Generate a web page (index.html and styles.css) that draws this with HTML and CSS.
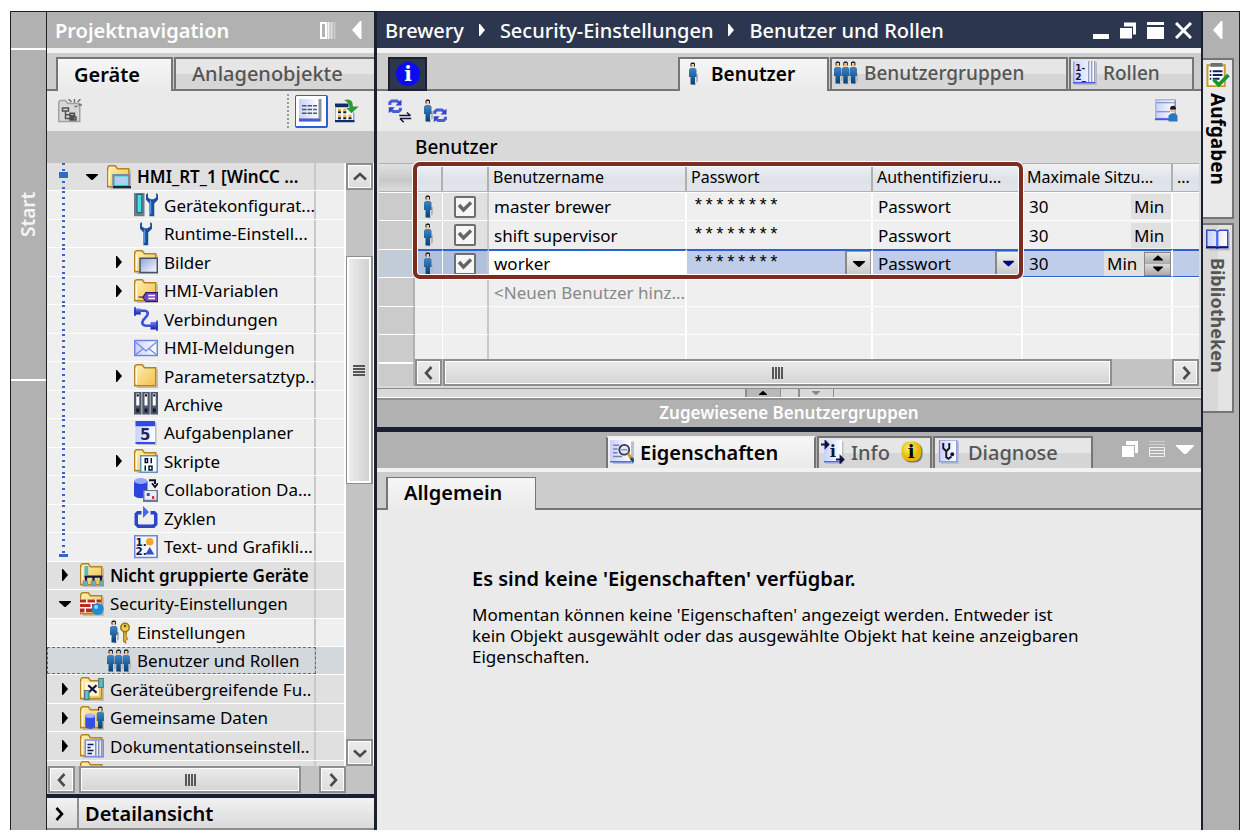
FILE: index.html
```html
<!DOCTYPE html>
<html lang="de">
<head>
<meta charset="utf-8">
<title>Benutzer und Rollen</title>
<link rel="stylesheet" href="styles.css">
</head>
<body>
<svg class="sprite" aria-hidden="true">
  <defs>
    <linearGradient id="gFolder" x1="0" y1="0" x2="1" y2="1"><stop offset="0" stop-color="#fff2b8"/><stop offset="1" stop-color="#f2bf48"/></linearGradient>
    <linearGradient id="gBody" x1="0" y1="0" x2="0" y2="1"><stop offset="0" stop-color="#3d86c8"/><stop offset="1" stop-color="#0b3d70"/></linearGradient>
    <linearGradient id="gSheet" x1="0" y1="0" x2="1" y2="0"><stop offset="0" stop-color="#c8d0ff"/><stop offset="1" stop-color="#ffffff"/></linearGradient>
    <linearGradient id="gBlue" x1="0" y1="0" x2="0" y2="1"><stop offset="0" stop-color="#6a84f4"/><stop offset="1" stop-color="#1420a8"/></linearGradient>
    <linearGradient id="gScreen" x1="0" y1="0" x2="1" y2="1"><stop offset="0" stop-color="#8ea0dc"/><stop offset="1" stop-color="#ffffff"/></linearGradient>
    <radialGradient id="gYellow" cx=".4" cy=".35"><stop offset="0" stop-color="#fff478"/><stop offset="1" stop-color="#e6b800"/></radialGradient>
  </defs>
  <symbol id="folder" viewBox="0 0 16 16"><path d="M2 15.500H15.800V3.500" stroke="#b8bcc4" fill="none"/><path d="M.5 14.500V1.500L1.500 .5H5.500L7 2.500H14.500V14.500Z" fill="url(#gFolder)" stroke="#b48420"/><path d="M1.500 3V13.500" stroke="#fffbe0" fill="none"/></symbol>
  <symbol id="person" viewBox="0 0 6 16"><path d="M2 15.500H4.500V8H6V13" fill="#b4b8be"/><path d="M1 4H4L5 5V10H4V15H1V10H0V5Z" fill="url(#gBody)"/><rect x="1" y=".3" width="3" height="3" rx="1" fill="#0c1230"/><rect x="1.600" y="1.300" width="1.800" height="2.500" fill="#f6c890"/></symbol>
  <symbol id="users" viewBox="0 0 16 16"><use href="#person" x="0" width="6" height="16"/><use href="#person" x="5.200" width="6" height="16"/><use href="#person" x="10.300" width="6" height="16"/></symbol>
  <symbol id="wrenchshape" viewBox="0 0 8 16"><path d="M0 1V4.500L2.300 7V15.500H5.500V7L8 4.500V1L6.800 0V3L5 4.200H3L1.300 3V0Z" fill="#174f9c"/><path d="M3 5V14" stroke="#5b94d8"/></symbol>
  <symbol id="hmi" viewBox="0 0 16 16"><use href="#folder" width="16" height="16"/><rect x="3.500" y="6" width="12" height="9" fill="#7d8b9c"/><rect x="4" y="14" width="12" height="1.500" fill="#202838"/><rect x="5.500" y="8" width="8" height="5" fill="#c4c8ec" stroke="#5cf4f4"/></symbol>
  <symbol id="devconf" viewBox="0 0 16 16"><rect x="0" y="0" width="7" height="15.500" fill="#6e7a88"/><rect x="2" y="1" width="3.200" height="12" fill="#3fe0e4" stroke="#0f5c68" stroke-width=".6"/><use href="#wrenchshape" x="8" width="8" height="16"/></symbol>
  <symbol id="wrench" viewBox="0 0 16 16"><use href="#wrenchshape" x="4" width="8" height="16"/></symbol>
  <symbol id="bilder" viewBox="0 0 16 16"><use href="#folder" width="16" height="16"/><rect x="4" y="5.500" width="11.500" height="9.500" fill="url(#gScreen)" stroke="#4a5468"/></symbol>
  <symbol id="tags" viewBox="0 0 16 16"><use href="#folder" width="16" height="16"/><path d="M3 12H6L8 9H16V15H8L6 12.500" fill="#7048bc" stroke="#2b126c" stroke-width=".8"/><path d="M9.500 11H14M9.500 13H14" stroke="#fff"/></symbol>
  <symbol id="connect" viewBox="0 0 16 16"><path d="M3 2.500H7Q10.500 3 8.500 6L6 9Q4.500 12 8 12.500H12" fill="none" stroke="#3854d4" stroke-width="1.800"/><rect x="0" y="1" width="4.500" height="4" fill="url(#gBlue)"/><rect x="11" y="10" width="5" height="5" fill="url(#gBlue)"/><path d="M.7 0V6M15.300 9V16" stroke="#2438c0"/></symbol>
  <symbol id="mail" viewBox="0 0 16 16"><rect x=".5" y="3" width="15" height="10" fill="url(#gSheet)" stroke="#6f84e8"/><path d="M1 4L8 10L15 4M1 12.500L6 8.500M15 12.500L10 8.500" fill="none" stroke="#7288dc" stroke-width=".8"/></symbol>
  <symbol id="archive" viewBox="0 0 16 16"><path d="M0 0H5V15H0ZM5.500 0H10.500V15H5.500ZM11 0H16V15H11Z" fill="#4e5668"/><path d="M1.500 1H3.500V9H1.500ZM7 1H9V9H7ZM12.500 1H14.500V9H12.500Z" fill="#fff"/><path d="M1.500 11H3.500V13.500H1.500ZM7 11H9V13.500H7ZM12.500 11H14.500V13.500H12.500Z" fill="#101838"/><path d="M1.800 1.500H3.200V3H1.800ZM7.300 1.500H8.700V3H7.300ZM12.800 1.500H14.200V3H12.800Z" fill="#101838"/></symbol>
  <symbol id="skripte" viewBox="0 0 16 16"><use href="#folder" width="16" height="16"/><rect x="4.500" y="4.500" width="11" height="11" fill="#fff" stroke="#5f94b8"/><path d="M7.500 6.500H9V9H7.500ZM10 11.500H12V14H10Z" fill="none" stroke="#0b1430"/><path d="M11.500 6V9.500M7.500 11V14.500" stroke="#0b1430"/></symbol>
  <symbol id="collab" viewBox="0 0 16 16"><path d="M0 2V12Q4 15 9 12V2Z" fill="#2a44e0"/><ellipse cx="4.500" cy="2" rx="4.500" ry="2" fill="#93a8f8"/><path d="M10 1.500H14V4M12 3.500L14 6L16 3.500" fill="none" stroke="#0d1030" stroke-width="1.300"/><rect x="6" y="8" width="10" height="8" fill="#6c7890"/><rect x="7" y="8.700" width="8" height="5.800" fill="#e8eef8"/><path d="M8.500 10H10.500V12H8.500Z" fill="#3448e8"/><path d="M12 12H13.500V14H12Z" fill="#d83030"/></symbol>
  <symbol id="cycle" viewBox="0 0 16 16"><path d="M5 4.500H2.500L1.500 5.500V12L3 13.500H13L14.500 12V5.500L13.500 4.500H11" fill="none" stroke="#2c44c8" stroke-width="2.300"/><path d="M6 0L10 4L6 8Z" fill="#4a68e8"/></symbol>
  <symbol id="ungrouped" viewBox="0 0 16 16"><use href="#folder" width="16" height="16"/><path d="M3 9H15M4 9V12M9 9V12M14 9V12" stroke="#0e1850" stroke-width="1.500"/><rect x="3" y="2" width="2.500" height="6" fill="#50bcc4"/><path d="M2 12H5V15H2ZM7.500 12H10.500V15H7.500ZM13 12H16V15H13Z" fill="#58b4b8" stroke="#8a929c" stroke-width=".7"/></symbol>
  <symbol id="security" viewBox="0 0 16 16"><use href="#folder" width="16" height="16"/><path d="M0 5H14V13.500H0Z" fill="#fff"/><path d="M0 5H4V7H0ZM5 5H10V7H5ZM11 5H14V7H11ZM0 8H7V10H0ZM8 8H14V10H8ZM0 11H3V13.500H0ZM4 11H9V13.500H4Z" fill="#b42c1c"/><circle cx="11.800" cy="11.300" r="4" fill="#1e8cd4"/><circle cx="10.700" cy="10" r="1.300" fill="#8ce0f8"/></symbol>
  <symbol id="userkey" viewBox="0 0 16 16"><use href="#person" x="2" width="6" height="16"/><circle cx="12" cy="5" r="2.800" fill="#e8d050" stroke="#94740c"/><circle cx="12" cy="4" r=".9" fill="#6c5408"/><path d="M11 8V14.500L12.500 15.500V13.500L14 12.500L12.800 11L13 8Z" fill="#d4b030" stroke="#94740c" stroke-width=".6"/></symbol>
  <symbol id="cross" viewBox="0 0 16 16"><use href="#folder" width="16" height="16"/><rect x="3.500" y="3.500" width="9" height="9" fill="#fff8e0"/><path d="M5.500 5.500L11 10.500M11 5.500L5.500 10.500" stroke="#0e1440" stroke-width="1.500"/><path d="M12.500 1H15.500V7H12.500ZM3 9H6V15H3Z" fill="#4cc8cc" stroke="#63707c" stroke-width=".8"/></symbol>
  <symbol id="common" viewBox="0 0 16 16"><use href="#folder" width="16" height="16"/><path d="M3.500 6V14Q7 16.500 10 14V6Z" fill="#3450e4"/><ellipse cx="6.700" cy="6.500" rx="3.200" ry="1.500" fill="#a0b0fc"/><use href="#person" x="11" width="6" height="16"/></symbol>
  <symbol id="docset" viewBox="0 0 16 16"><use href="#folder" width="16" height="16"/><rect x="3.500" y="4" width="12" height="11" fill="#eef0ff" stroke="#7c90dc"/><path d="M5 7H9M5 9H7M5 11H9M5 13H8" stroke="#141c48"/><path d="M10.500 4.500V14.500M12.500 4.500V14.500M14.500 4.500V14.500" stroke="#8894a8"/></symbol>
  <symbol id="arrows" viewBox="0 0 10 10"><path d="M1.200 4V2.500L2.500 1.400H6L7.500 2.500M8.300 5.800V7.200L7 8.400H3.500L2 7.300" fill="none" stroke="#4a5cd8" stroke-width="2"/><path d="M5 4.300H9V.3ZM4.500 5.500H.5V9.500Z" fill="#3044c8"/></symbol>
  <symbol id="sync" viewBox="0 0 16 16"><use href="#arrows" width="10" height="10"/><path d="M7.500 11H15M8 13H15.500M12.500 9L15 11M10.500 15.500L8 13" fill="none" stroke="#10143c"/></symbol>
  <symbol id="usersync" viewBox="0 0 16 16"><use href="#person" x="0" width="6" height="16"/><use href="#arrows" x="6" y="6" width="10" height="10"/></symbol>
  <symbol id="panel" viewBox="0 0 16 16"><path d="M.5 .5H13.500V13H.5Z" fill="url(#gSheet)" stroke="#a8b4f0"/><path d="M0 13.500H13" stroke="#4858e0" stroke-width="1.300"/><path d="M1 2.500H14M1 8.500H10" stroke="#7884a4" stroke-width=".8"/><path d="M13.500 1V9" stroke="#8890a8"/><circle cx="12" cy="7" r="2" fill="#f0c080"/><path d="M10 7Q10 4.500 12 4.500T14 7Z" fill="#10183c"/><path d="M9 15V11L11 9.500H13.500L15 11V15Z" fill="#2c78bc"/></symbol>
  <symbol id="clip" viewBox="0 0 16 16"><path d="M1 1.500H12.500V15.500H1Z" fill="#fff" stroke="#c89c28" stroke-width="1.300"/><rect x="3" y="0" width="8" height="2.500" fill="#68707c"/><path d="M2.500 5.500H3.500M4.500 5.500H11M2.500 8H3.500M4.500 8H11M2.500 10.500H3.500M4.500 10.500H9" stroke="#141c60" stroke-width="1.200"/><path d="M5 11L8.500 14.500L15 8" fill="none" stroke="#1c9430" stroke-width="2.500"/></symbol>
  <symbol id="book" viewBox="0 0 16 16"><path d="M2 14.500H16V3" fill="none" stroke="#b8bcc4"/><path d="M.5 1.500H6L7.500 2.500L9 1.500H14.500V12.500H9L7.500 13.500L6 12.500H.5Z" fill="url(#gSheet)" stroke="#3448c8"/><path d="M7.500 2V13" stroke="#4866f0" stroke-width="1.500"/><path d="M0 13H15" stroke="#141c60" stroke-width="1.300"/></symbol>
  <symbol id="props" viewBox="0 0 16 16"><rect x="2" y="1" width="14" height="15" fill="#bcc0cc"/><rect x="0" y="0" width="14" height="14.500" fill="url(#gSheet)"/><path d="M0 14.500H14" stroke="#5468e0"/><path d="M2 3.500H6M2 6H5M2 8.500H5M2 11H8" stroke="#7c84a0"/><circle cx="9.500" cy="6.500" r="3.300" fill="#e4e8f8" stroke="#30365c" stroke-width="1.200"/><path d="M7.500 6.500H11.500" stroke="#8c94ac"/><path d="M12 9L15 13.500" stroke="#d89c20" stroke-width="2"/><path d="M14 12L15.800 14.500" stroke="#204880" stroke-width="2"/></symbol>
  <symbol id="diag" viewBox="0 0 16 16"><rect x="2" y="1" width="12" height="15" fill="#bcc0cc"/><rect x="1" y="0" width="11.500" height="14.500" fill="url(#gSheet)" stroke="#7c90ec" stroke-width=".8"/><path d="M3.500 2V5.500L5.500 7.500L7.500 5.500V2M5.500 7V11.500L7 12.500L9 11" fill="none" stroke="#141820" stroke-width="1.300"/><circle cx="9.500" cy="9.500" r="1.300" fill="#141820"/></symbol>
  <symbol id="newdev" viewBox="0 0 16 16"><path d="M.5 15V2L1.500 1H5L6.500 3H14.500V15Z" fill="#d8d8d8" stroke="#a0a0a0"/><path d="M3 6H7V8H3ZM5 8V13H11M5 10.500H8M8 9.500H11V11H8ZM8 12H12V14H8Z" fill="none" stroke="#505050"/><path d="M7 0L9 2M11 0V2.500M15 0L13 2M13.500 4H16M11 5H13" stroke="#707070"/></symbol>
  <symbol id="list" viewBox="0 0 16 16"><rect x="0" y="0" width="15" height="15" fill="#8890a4"/><rect x="0" y="0" width="13" height="13" fill="url(#gSheet)"/><path d="M0 14H14" stroke="#4858e0" stroke-width="1.800"/><path d="M2 4.500H12M2 7H12M2 9.500H12" stroke="#4c5468" stroke-dasharray="3 .7" stroke-width=".9"/></symbol>
  <symbol id="export" viewBox="0 0 16 16"><rect x="0" y="3" width="13" height="12.500" fill="#f4f6ff"/><rect x="0" y="3" width="9" height="2.500" fill="#102c68"/><rect x="0" y="14" width="13" height="1.500" fill="#102c68"/><path d="M0 5V14M12.500 9V14" stroke="#90a0d0"/><path d="M2 6.500H4V8H2ZM5.500 6.500H7.500V8H5.500ZM2 10.500H4V12H2ZM5.500 10.500H7.500V12H5.500ZM9 10.500H11V12H9Z" fill="#f4b030"/><path d="M2 8.200H4V9.500H2ZM5.500 8.200H7.500V9.500H5.500ZM2 12.200H4V13.500H2ZM5.500 12.200H7.500V13.500H5.500ZM9 12.200H11V13.500H9Z" fill="#101840"/><path d="M6 .8Q12 -1 12 5H15.800L11 9.500L7.500 6H9.500Q10 2.500 6 .8Z" fill="#2c9c30"/></symbol>
  <symbol id="right" viewBox="0 0 12 12"><path d="M3 0H4L9 6L4 12H3Z" fill="currentColor"/></symbol>
  <symbol id="down" viewBox="0 0 12 12"><path d="M0 3H12V4L6.500 9H5.500L0 4Z" fill="currentColor"/></symbol>
  <symbol id="left" viewBox="0 0 10 18"><path d="M9.500 0V18H8L0 9L8 0Z" fill="currentColor"/></symbol>
  <symbol id="chev" viewBox="0 0 14 14"><path d="M1 9.500L7 4L13 9.500" fill="none" stroke="currentColor" stroke-width="2.600"/></symbol>
  <symbol id="restore" viewBox="0 0 16 16"><path d="M4 0H16V12H13V4H4Z" fill="#fff"/><path d="M0 5H12V16H0Z" fill="#fff"/></symbol>
</svg>

<div class="app">
  <aside class="rail rail-left">
    <div class="rail-cap"></div>
    <button class="rail-start">Start</button>
    <div class="rail-rest"></div>
  </aside>

  <section class="nav" aria-label="Projektnavigation">
    <header class="nav-title">
      <h2>Projektnavigation</h2>
      <button aria-label="Spalten"><svg width="17" height="17" viewBox="0 0 17 17"><path d="M1 1H6V16H1Z" fill="none" stroke="#fff" stroke-width="2"/><path d="M8.500 0V17" stroke="#f4f4f4" stroke-width="2"/><path d="M11.500 0V17" stroke="#e0e0e0" stroke-width="2"/><path d="M14.500 0V17" stroke="#cacaca" stroke-width="2"/></svg></button>
      <button aria-label="Einklappen"><svg width="10" height="18"><use href="#left"/></svg></button>
    </header>
    <div class="tabs nav-tabs" role="tablist">
      <button class="tab active" role="tab">Geräte</button>
      <button class="tab" role="tab">Anlagenobjekte</button>
    </div>
    <div class="toolbar nav-toolbar">
      <button aria-label="Neues Gerät"><svg class="ic"><use href="#newdev"/></svg></button>
      <span class="dots"></span>
      <button class="pressed" aria-label="Liste"><svg class="ic"><use href="#list"/></svg></button>
      <button aria-label="Übersicht"><svg class="ic"><use href="#export"/></svg></button>
    </div>
    <div class="nav-band"></div>
    <div class="tree-area">
      <ul class="tree">
        <li class="l2 head line first bold"><span class="label"><button class="tw" aria-label="Zuklappen"><svg><use href="#down"/></svg></button><svg class="ic"><use href="#hmi"/></svg>HMI_RT_1 [WinCC ...</span></li>
        <li class="l3 line"><span class="label"><i class="tw"></i><svg class="ic"><use href="#devconf"/></svg>Gerätekonfigurat...</span></li>
        <li class="l3 line"><span class="label"><i class="tw"></i><svg class="ic"><use href="#wrench"/></svg>Runtime-Einstell...</span></li>
        <li class="l3 line"><span class="label"><button class="tw" aria-label="Aufklappen"><svg><use href="#right"/></svg></button><svg class="ic"><use href="#bilder"/></svg>Bilder</span></li>
        <li class="l3 line"><span class="label"><button class="tw" aria-label="Aufklappen"><svg><use href="#right"/></svg></button><svg class="ic"><use href="#tags"/></svg>HMI-Variablen</span></li>
        <li class="l3 line"><span class="label"><i class="tw"></i><svg class="ic"><use href="#connect"/></svg>Verbindungen</span></li>
        <li class="l3 line"><span class="label"><i class="tw"></i><svg class="ic"><use href="#mail"/></svg>HMI-Meldungen</span></li>
        <li class="l3 line"><span class="label"><button class="tw" aria-label="Aufklappen"><svg><use href="#right"/></svg></button><svg class="ic"><use href="#folder"/></svg>Parametersatztyp..</span></li>
        <li class="l3 line"><span class="label"><i class="tw"></i><svg class="ic"><use href="#archive"/></svg>Archive</span></li>
        <li class="l3 line"><span class="label"><i class="tw"></i><svg class="ic" viewBox="0 0 16 16"><rect x="2" y="1" width="13" height="15" fill="#b8bcc4"/><rect x="1" y="0" width="13" height="15" fill="url(#gSheet)"/><rect x="1" y="0" width="13" height="3.500" fill="#3448e8"/><rect x="1" y="14" width="13" height="1.300" fill="#3448e8"/><text x="7.500" y="12.500" text-anchor="middle" font-family="DejaVu Sans" font-weight="bold" font-size="10" fill="#202858">5</text></svg>Aufgabenplaner</span></li>
        <li class="l3 line"><span class="label"><button class="tw" aria-label="Aufklappen"><svg><use href="#right"/></svg></button><svg class="ic"><use href="#skripte"/></svg>Skripte</span></li>
        <li class="l3 line"><span class="label"><i class="tw"></i><svg class="ic"><use href="#collab"/></svg>Collaboration Da...</span></li>
        <li class="l3 line"><span class="label"><i class="tw"></i><svg class="ic"><use href="#cycle"/></svg>Zyklen</span></li>
        <li class="l3 line last"><span class="label"><i class="tw"></i><svg class="ic" viewBox="0 0 16 16"><rect x=".5" y=".5" width="15" height="14.500" fill="#f4f6ff" stroke="#6f84e8"/><path d="M15.500 1V15" stroke="#7c88a8"/><text font-family="DejaVu Sans" font-weight="bold" font-size="7" fill="#10143c"><tspan x="1" y="7">1.</tspan><tspan x="1" y="13.500">2.</tspan></text><circle cx="10.500" cy="4.500" r="2.500" fill="#f4a818"/><path d="M10.500 8L13.500 13H7.500Z" fill="#3050c8"/></svg>Text- und Grafikli...</span></li>
        <li class="l1 head bold"><span class="label"><button class="tw" aria-label="Aufklappen"><svg><use href="#right"/></svg></button><svg class="ic"><use href="#ungrouped"/></svg>Nicht gruppierte Geräte</span></li>
        <li class="l1 head"><span class="label"><button class="tw" aria-label="Zuklappen"><svg><use href="#down"/></svg></button><svg class="ic"><use href="#security"/></svg>Security-Einstellungen</span></li>
        <li class="l2"><span class="label"><i class="tw"></i><svg class="ic"><use href="#userkey"/></svg>Einstellungen</span></li>
        <li class="l2 selected"><span class="label"><i class="tw"></i><svg class="ic"><use href="#users"/></svg>Benutzer und Rollen</span></li>
        <li class="l1 head"><span class="label"><button class="tw" aria-label="Aufklappen"><svg><use href="#right"/></svg></button><svg class="ic"><use href="#cross"/></svg>Geräteübergreifende Fu..</span></li>
        <li class="l1 head"><span class="label"><button class="tw" aria-label="Aufklappen"><svg><use href="#right"/></svg></button><svg class="ic"><use href="#common"/></svg>Gemeinsame Daten</span></li>
        <li class="l1 head"><span class="label"><button class="tw" aria-label="Aufklappen"><svg><use href="#right"/></svg></button><svg class="ic"><use href="#docset"/></svg>Dokumentationseinstell..</span></li>
        <li class="l1 head peek"><span class="label"><i class="tw"></i><svg class="ic"><use href="#folder"/></svg></span></li>
      </ul>
      <div class="vscroll">
        <button class="sbtn" aria-label="Nach oben"><svg><use href="#chev"/></svg></button>
        <div class="vthumb"><span class="grip-h"></span></div>
        <button class="sbtn" aria-label="Nach unten"><svg class="r180"><use href="#chev"/></svg></button>
      </div>
    </div>
    <div class="hscroll nav-hscroll">
      <button class="sbtn" aria-label="Nach links"><svg class="r270"><use href="#chev"/></svg></button>
      <div class="hthumb"><span class="grip-v"></span></div>
      <button class="sbtn" aria-label="Nach rechts"><svg class="r90"><use href="#chev"/></svg></button>
    </div>
    <button class="detail"><span class="detail-arrow"><svg class="r90"><use href="#chev"/></svg></span><span class="detail-name">Detailansicht</span></button>
  </section>

  <main class="main">
    <header class="main-title">
      <nav class="crumbs"><a href="#">Brewery</a><svg><use href="#right"/></svg><a href="#">Security-Einstellungen</a><svg><use href="#right"/></svg><a href="#">Benutzer und Rollen</a></nav>
      <div class="winbtns">
        <button aria-label="Minimieren"><svg width="16" height="17"><rect y="12" width="16" height="5" fill="#fff"/></svg></button>
        <button aria-label="Wiederherstellen"><svg width="16" height="17"><use href="#restore"/><path d="M0 5.500H12.500V17" fill="none" stroke="#2d364f"/></svg></button>
        <button aria-label="Maximieren"><svg width="17" height="17"><path d="M0 0H17V3H0ZM0 5H17V17H0Z" fill="#fff"/></svg></button>
        <button aria-label="Schließen"><svg width="17" height="17"><path d="M1 1L16 16M16 1L1 16" stroke="#fff" stroke-width="3"/></svg></button>
      </div>
    </header>
    <div class="tabs main-tabs" role="tablist">
      <button class="infobtn" aria-label="Information"><svg viewBox="0 0 24 24"><circle cx="12" cy="12" r="12" fill="#0c0cf4"/><text x="12" y="19" text-anchor="middle" font-family="DejaVu Serif" font-weight="bold" font-size="20" fill="#fff">i</text></svg></button>
      <button class="tab active t-user" role="tab"><svg class="ic person"><use href="#person"/></svg>Benutzer</button>
      <button class="tab t-groups" role="tab"><svg class="ic"><use href="#users"/></svg>Benutzergruppen</button>
      <button class="tab t-roles" role="tab"><svg class="ic" viewBox="0 0 16 16"><rect x="1" y="1" width="15" height="15" fill="#b4b8c4"/><rect x="0" y="0" width="15" height="15" fill="url(#gSheet)"/><path d="M.5 15V.5" stroke="#98a4f0"/><path d="M0 14.500H15" stroke="#4858e0"/><path d="M10.500 0V14M12.500 0V14M14.500 0V14" stroke="#8890b4" stroke-width=".8"/><text font-family="DejaVu Sans" font-weight="bold" font-size="6" fill="#10143c"><tspan x="1.500" y="6.500">1-</tspan><tspan x="1.500" y="12.500">2_</tspan></text></svg>Rollen</button>
    </div>
    <div class="toolbar main-toolbar">
      <button aria-label="Synchronisieren"><svg class="ic"><use href="#sync"/></svg></button>
      <button aria-label="Benutzer aktualisieren"><svg class="ic"><use href="#usersync"/></svg></button>
      <button class="push" aria-label="Ansicht"><svg class="ic"><use href="#panel"/></svg></button>
    </div>
    <h3 class="section">Benutzer</h3>
    <div class="grid-wrap">
      <div class="grid-clip">
        <table class="users">
          <colgroup><col class="c0"><col class="c1"><col class="c2"><col class="c3"><col class="c4"><col class="c5"><col class="c6"><col></colgroup>
          <thead><tr><th class="gut"></th><th></th><th></th><th>Benutzername</th><th>Passwort</th><th>Authentifizieru...</th><th>Maximale Sitzu...</th><th>...</th></tr></thead>
          <tbody>
            <tr><td class="gut"></td><td class="shade"><svg class="person"><use href="#person"/></svg></td><td class="shade"><input type="checkbox" checked aria-label="master brewer aktiv"></td><td>master brewer</td><td class="pw">********</td><td>Passwort</td><td><div class="limit"><span>30</span><span class="unit">Min</span></div></td><td></td></tr>
            <tr><td class="gut"></td><td class="shade"><svg class="person"><use href="#person"/></svg></td><td class="shade"><input type="checkbox" checked aria-label="shift supervisor aktiv"></td><td>shift supervisor</td><td class="pw">********</td><td>Passwort</td><td><div class="limit"><span>30</span><span class="unit">Min</span></div></td><td></td></tr>
            <tr class="current"><td class="gut"></td><td class="shade"><svg class="person"><use href="#person"/></svg></td><td class="shade"><input type="checkbox" checked aria-label="worker aktiv"></td><td class="edit"><input type="text" value="worker" aria-label="Benutzername"></td><td class="pw"><div class="drop"><span>********</span><button aria-label="Passwort ändern"><svg><use href="#down"/></svg></button></div></td><td><div class="drop auth"><select aria-label="Authentifizierung"><option>Passwort</option></select><svg class="arrow"><use href="#down"/></svg></div></td><td><div class="limit"><input type="text" value="30" aria-label="Maximale Sitzungsdauer"><span class="unit">Min</span><span class="spin"><button aria-label="Mehr"><svg class="r180"><use href="#down"/></svg></button><button aria-label="Weniger"><svg><use href="#down"/></svg></button></span></div></td><td></td></tr>
            <tr><td class="gut"></td><td></td><td></td><td class="hint">&lt;Neuen Benutzer hinz...</td><td></td><td></td><td></td><td></td></tr>
            <tr><td class="gut"></td><td></td><td></td><td></td><td></td><td></td><td></td><td></td></tr>
            <tr><td class="gut"></td><td></td><td></td><td></td><td></td><td></td><td></td><td></td></tr>
          </tbody>
        </table>
      </div>
      <div class="mark"></div>
      <div class="hscroll grid-hscroll">
        <span class="gutfoot"></span>
        <button class="sbtn" aria-label="Nach links"><svg class="r270"><use href="#chev"/></svg></button>
        <div class="hthumb"><span class="grip-v"></span></div>
        <button class="sbtn" aria-label="Nach rechts"><svg class="r90"><use href="#chev"/></svg></button>
      </div>
    </div>
    <div class="splitter"><button class="sp-up" aria-label="Hoch"><svg class="r180"><use href="#down"/></svg></button><button class="sp-down" aria-label="Runter"><svg><use href="#down"/></svg></button></div>
    <h3 class="assigned">Zugewiesene Benutzergruppen</h3>

    <section class="inspector">
      <div class="tabs insp-tabs" role="tablist">
        <button class="tab active t-props" role="tab"><svg class="ic"><use href="#props"/></svg>Eigenschaften</button>
        <button class="tab t-info" role="tab"><svg class="ic" viewBox="0 0 16 16"><rect x="3" y="1" width="12" height="15" fill="#bcc0cc"/><rect x="2" y="0" width="12" height="15" fill="url(#gSheet)"/><path d="M2 14.500H14" stroke="#5468e0"/><text x="8" y="11.500" text-anchor="middle" font-family="DejaVu Serif" font-weight="bold" font-size="11" fill="#10143c">i</text><path d="M0 3H3M3 1L5 3L3 5ZM10 13H13M13 11L15 13L13 15Z" fill="#10143c" stroke="#10143c" stroke-width="1.200"/></svg>Info<svg class="ic yellow" viewBox="0 0 16 16"><rect x="2" y="2" width="13" height="13" rx="5" fill="#7c7c7c"/><rect x="1" y="1" width="13" height="13" rx="5" fill="url(#gYellow)"/><text x="7.500" y="12" text-anchor="middle" font-family="DejaVu Serif" font-weight="bold" font-size="12" fill="#000">i</text></svg></button>
        <button class="tab t-diag" role="tab"><svg class="ic"><use href="#diag"/></svg>Diagnose</button>
        <div class="winbtns">
          <button aria-label="Wiederherstellen"><svg width="16" height="16"><use href="#restore"/><path d="M0 4.500H12.500V16" fill="none" stroke="#b1b1b1"/></svg></button>
          <button aria-label="Liste"><svg width="16" height="16"><path d="M0 .5H16M0 3.500H16" stroke="#cfcfcf"/><path d="M.5 6.500H15.500V15.500H.5ZM0 9.500H16M0 12.500H16" fill="none" stroke="#efefef"/></svg></button>
          <button aria-label="Einklappen"><svg width="18" height="16"><path d="M0 4H18V5L10 13H8L0 5Z" fill="#fff"/></svg></button>
        </div>
      </div>
      <div class="tabs sub-tabs" role="tablist"><button class="tab active" role="tab">Allgemein</button></div>
      <div class="message">
        <h4>Es sind keine 'Eigenschaften' verfügbar.</h4>
        <p>Momentan können keine 'Eigenschaften' angezeigt werden. Entweder ist kein Objekt ausgewählt oder das ausgewählte Objekt hat keine anzeigbaren Eigenschaften.</p>
      </div>
    </section>
  </main>

  <aside class="rail rail-right">
    <button class="collapse" aria-label="Ausklappen"><svg width="10" height="18"><use href="#left"/></svg></button>
    <button class="vtab v-tasks"><svg class="ic"><use href="#clip"/></svg><span>Aufgaben</span></button>
    <button class="vtab v-libs"><svg class="ic"><use href="#book"/></svg><span>Bibliotheken</span></button>
  </aside>
</div>
</body>
</html>
```
FILE: styles.css
```css
* { box-sizing: border-box; }
body { margin: 0; background: #fff; font-family: "Noto Sans", sans-serif; font-size: 17px; line-height: 21px; color: #000; }
button, input, select { font: inherit; color: inherit; margin: 0; padding: 0; border: 0; background: none; border-radius: 0; }
button { display: flex; align-items: center; justify-content: center; flex: none; }
h2, h3, h4, p, ul { margin: 0; padding: 0; }
a { color: inherit; text-decoration: none; }
svg { display: block; flex: none; }
.sprite { position: absolute; width: 0; height: 0; }
.ic { width: 24px; height: 24px; }
.r90 { transform: rotate(90deg); }
.r180 { transform: rotate(180deg); }
.r270 { transform: rotate(270deg); }

.app { display: grid; grid-template-columns: 36px 328px minmax(0, 1fr) 36px; min-height: calc(100vh - 21px); margin: 11px 13px 10px 10px; border: solid #1b2030; border-width: 1px 1px 0; background: #1b2030; }

/* side rails */
.rail { display: flex; flex-direction: column; background: #b1b1b1; }
.rail-left { border-right: 1px solid #1b2030; }
.rail-cap { height: 36px; }
.rail-start { height: 333px; border: solid #fff; border-width: 2px 0; color: #f4f4f4; font-weight: 600; font-size: 19px; writing-mode: vertical-rl; transform: rotate(180deg); }
.rail-right { align-items: flex-start; }
.collapse { width: 30px; height: 36px; margin-bottom: 10px; color: #fff; }
.vtab { flex-direction: column; justify-content: flex-start; width: 31px; padding-top: 3px; border: solid #757575; border-width: 2px 2px 2px 0; background: linear-gradient(90deg, #d8d8d8 50%, #e4e4e4 50%); color: #555; font-weight: 700; font-size: 19px; }
.vtab span { writing-mode: vertical-rl; }
.v-tasks { height: 161px; gap: 6px; margin-bottom: 4px; background: #eaeaea; color: #000; }
.v-libs { height: 190px; gap: 6px; font-size: 18px; }

/* tabs */
.tabs { display: flex; align-items: stretch; height: 38px; padding-top: 4px; background: #ccc; box-shadow: inset 0 -2px #757575; }
.tab { justify-content: flex-start; gap: 6px; border: 2px solid #757575; background: linear-gradient(#e6e6e6 50%, #d6d6d6 50%); color: #555; font-weight: 500; font-size: 20px; white-space: nowrap; }
.tab.active { border-bottom: 0; background: linear-gradient(#f6f6f6, #eaeaea); color: #000; font-weight: 600; }

/* toolbars */
.toolbar { display: flex; align-items: center; height: 40px; background: #eaeaea; }

/* project navigation */
.nav { display: flex; flex-direction: column; border-right: 1px solid #1b2030; }
.nav-title { display: flex; align-items: center; gap: 15px; height: 36px; padding: 0 12px 0 8px; background: #b1b1b1; color: #fff; }
.nav-title h2 { flex: 1; font-size: 20px; font-weight: 600; }
.nav-tabs, .main-tabs { border-top: 5px solid #f2f2f2; height: 43px; }
.nav-tabs { padding-left: 9px; }
.nav-tabs .tab { width: 117px; padding: 0 0 2px 16px; }
.nav-tabs .tab:last-child { flex: 1; margin-left: 1px; border-right: 0; }
.nav-toolbar { padding: 0 15px 0 11px; }
.nav-toolbar .dots { width: 2px; height: 35px; margin: 0 6px 0 auto; background: repeating-linear-gradient(#999 0 2px, transparent 2px 4px); }
.nav-toolbar .pressed { width: 33px; height: 33px; margin-right: 7px; border: solid #2c5fd4; border-width: 1px 2px 2px 1px; border-radius: 2px; background: #fff; }
.nav-band { height: 32px; background: #c3c3c3; }
.tree-area { display: flex; flex: 1; min-height: 603px; background: #fff; }
.tree { display: flex; flex-direction: column; flex: 1; min-width: 0; list-style: none; overflow: hidden; }
.tree li { display: flex; flex: 1; border-bottom: 1px solid #fff; background-color: #efefef; padding-right: 28px; }
.tree li.head { background-color: #e0e0e0; }
.tree li.peek { flex: none; height: 5px; overflow: hidden; border: 0; }
.tree .peek .label { align-items: flex-start; }
.tree li.selected { background-color: #d3d8dd; }
.selected .label { outline: 1px dashed #6a6a6a; outline-offset: -1px; }
.label { display: flex; align-items: center; flex: 1; min-width: 0; overflow: hidden; border-right: 2px solid #c8c8c8; white-space: nowrap; }
.bold { font-weight: 600; }
.l1 .label { padding-left: 6px; }
.l2 .label { padding-left: 33px; }
.l3 .label { padding-left: 60px; }
.tw { display: flex; align-items: center; justify-content: center; flex: none; width: 24px; height: 24px; margin-right: 3px; }
.tw svg { width: 12px; height: 12px; }
.label .ic { margin-right: 6px; }
.line { background-image: repeating-linear-gradient(#3468c4 0 2px, transparent 2px 6px); background-position: 15px 0; background-size: 3px 100%; background-repeat: no-repeat; }
.line.first { background-image: linear-gradient(#3468c4, #3468c4), repeating-linear-gradient(#3468c4 0 2px, transparent 2px 6px); background-position: 12px 9px, 15px 0; background-size: 9px 6px, 3px 100%; }
.line.last { background-image: linear-gradient(#3468c4, #3468c4), repeating-linear-gradient(#3468c4 0 2px, transparent 2px 6px); background-position: 12px 21px, 15px 0; background-size: 9px 3px, 3px 20px; }

/* scrollbars */
.sbtn { width: 27px; height: 27px; border: 2px solid #8e8e8e; background: linear-gradient(#ececec, #dcdcdc); box-shadow: inset 0 0 0 1px #fff; color: #4c4c4c; }
.sbtn svg { width: 14px; height: 14px; }
.vscroll { display: flex; flex-direction: column; justify-content: space-between; width: 27px; margin: 0 1px 0 2px; background: #c3c3c3; }
.vthumb { display: flex; align-items: center; justify-content: center; flex: none; height: 228px; margin-bottom: 189px; border: 1px solid #8e8e8e; border-right-width: 2px; background: linear-gradient(90deg, #f0f0f0, #cecece); box-shadow: inset 0 0 0 2px #fff; }
.hscroll { display: flex; background: #c3c3c3; }
.hthumb { display: flex; align-items: center; justify-content: center; border: 2px solid #8e8e8e; background: linear-gradient(#ebebeb, #d4d4d4); box-shadow: inset 0 0 0 1px #fff; }
.grip-h { width: 12px; height: 11px; background: repeating-linear-gradient(#555 0 2px, transparent 2px 3px); }
.grip-v { width: 11px; height: 12px; background: repeating-linear-gradient(90deg, #555 0 2px, transparent 2px 3px); }
.nav-hscroll { height: 28px; padding: 0 28px 0 1px; }
.nav-hscroll .hthumb { flex: 1; height: 27px; margin: 0 18px 0 4px; }
.detail { justify-content: flex-start; align-items: stretch; height: 36px; border: solid #1b2030; border-width: 4px 0 0; background: linear-gradient(#f2f2f2, #d8d8d8); box-shadow: inset 0 -2px #8e8e8e; font-weight: 600; font-size: 20px; }
.detail-arrow { display: flex; align-items: center; justify-content: center; width: 32px; border-right: 2px solid #8e8e8e; padding-right: 6px; }
.detail-arrow svg { width: 14px; height: 14px; }
.detail-name { display: flex; align-items: center; padding: 0 0 2px 6px; }

/* editor area */
.main { display: flex; flex-direction: column; min-width: 0; border: solid #1b2030; border-width: 0 2px; }
.main-title { display: flex; align-items: center; height: 36px; padding: 0 9px 0 8px; background: #2d364f; color: #fff; font-size: 20px; font-weight: 500; }
.crumbs { display: flex; align-items: center; gap: 12px; flex: 1; }
.crumbs svg { width: 12px; height: 12px; }
.winbtns { display: flex; gap: 11px; }
.infobtn { width: 39px; border: 2px solid #1b2030; background: #2d364f; margin: 0 auto 0 11px; }
.infobtn svg { width: 24px; height: 24px; }
.main-tabs { padding-right: 7px; }
.main-tabs .tab { margin-left: 1px; padding-bottom: 2px; font-size: 19px; }
.person { width: 9px; height: 24px; }
.main-tabs .t-user { width: 151px; gap: 13px; padding-left: 9px; }
.t-groups { width: 238px; padding-left: 2px; }
.t-roles { width: 125px; padding-left: 2px; }
.main-toolbar { gap: 12px; padding: 0 22px 0 11px; }
.push { margin-left: auto; }
.section { height: 32px; padding: 6px 0 0 38px; background: #d9d9d9; font-size: 19px; font-weight: 500; line-height: 21px; }
.grid-wrap { position: relative; padding: 0 2px 2px; background: #d9d9d9; }
.grid-clip { height: 196px; overflow: hidden; }
.users { width: 100%; table-layout: fixed; border-collapse: separate; border-spacing: 0; }
.c0 { width: 36px; } .c1 { width: 28px; } .c2 { width: 46px; } .c3 { width: 198px; } .c4 { width: 186px; } .c5 { width: 150px; } .c6 { width: 150px; }
.users th { height: 29px; padding: 0 0 0 4px; border: solid #b0b0b0; border-width: 1px 2px 1px 0; background: linear-gradient(#f0f2f4, #dde2e8 60%, #e2e6ec); font-size: 16px; font-weight: 400; text-align: left; white-space: nowrap; }
.users th.gut { background: linear-gradient(#e0e0e0, #c8c8c8 60%, #dcdcdc); border-right: 0; }
.users td { height: 28px; padding: 0 0 0 5px; border: solid #fff; border-width: 1px 2px 0 0; background: #efefef; white-space: nowrap; }
.users tr:nth-child(even) td { height: 29px; }
.users td.gut { border-right: 2px solid #b0b0b0; background: #cbcbcb; }
.users td.shade { background: #e1e1e1; }
.users td:nth-child(2) { padding-left: 9px; border-right-width: 1px; }
.users td:nth-child(3) { padding-left: 11px; border-right-color: #c8c8c8; }
.users td:nth-child(7) { padding-left: 6px; }
.users .hint { color: #888; }
.users .pw { padding-left: 6px; font-family: "Liberation Mono", monospace; font-size: 18px; }
.users td:last-child, .users th:last-child { border-right: 0; }
.users input[type="checkbox"] { display: block; appearance: none; width: 22px; height: 22px; border: 2px solid #6e6e6e; border-radius: 2px; background: url("data:image/svg+xml,%3Csvg xmlns='http://www.w3.org/2000/svg' viewBox='0 0 18 18'%3E%3Cpath d='M3 7L7.500 12L15 4.500' fill='none' stroke='%23666' stroke-width='3.500'/%3E%3C/svg%3E") #f6f6f6; }
.users .current td { border-top: 2px solid #2c62d0; border-bottom: 1px solid #2c62d0; background: #bfcde8; }
.users .current td.shade { background: #b1c0dc; }
.users .current td.gut { border-top: 1px solid #fff; border-bottom: 0; background: #c2ccd6; }
.users .current td.edit { background: #fff; }
.edit input { display: block; width: 100%; height: 24px; }
.drop { display: flex; align-items: center; justify-content: space-between; height: 25px; }
.drop button, .auth .arrow { width: 26px; height: 25px; padding: 6px; border: 1px solid #999; border-left: 2px solid #888; background: linear-gradient(#f0f0f0, #c8c8c8); }
.drop button { padding: 0; }
.drop svg { width: 12px; height: 12px; }
.auth { display: grid; grid-template-columns: 1fr 26px; }
.auth select { grid-area: 1 / 1 / 2 / 3; width: 100%; height: 25px; appearance: none; outline: 0; }
.auth .arrow { grid-area: 1 / 2; width: 26px; height: 25px; color: #00008c; pointer-events: none; }
.limit { display: flex; align-items: center; justify-content: space-between; height: 25px; }
.limit input { width: 60px; }
.unit { display: flex; align-items: center; width: 40px; height: 25px; padding-left: 3px; background: #e0e0e0; }
.current .unit { margin-left: auto; }
.spin { display: flex; flex-direction: column; width: 27px; height: 24px; border: 1px solid #888; }
.spin button { flex: 1; background: linear-gradient(#ddd, #aaa); }
.spin svg { width: 12px; height: 10px; }
.mark { position: absolute; top: -1px; left: 36px; width: 610px; height: 117px; border: 4px solid #7e2c22; border-radius: 7px; box-shadow: 0 0 0 1px #fff, inset 0 0 0 1px #fff; pointer-events: none; }
.gutfoot { width: 36px; border-right: 2px solid #b0b0b0; background: linear-gradient(#cbcbcb 3px, #fff 3px 5px, #cbcbcb 5px); }
.grid-hscroll .hthumb { flex: 1; height: 27px; margin: 0 60px 0 1px; }
.splitter { display: flex; justify-content: center; gap: 17px; height: 12px; border: solid #8e8e8e; border-width: 1px 0 2px; background: #d9d9d9; box-shadow: inset 0 -1px #fff; }
.splitter button { width: 36px; height: 8px; border: solid #8e8e8e; border-width: 0 1px 0 2px; background: #b8b8b8; }
.splitter .sp-down { background: #d9d9d9; color: #888; }
.splitter svg { width: 10px; height: 8px; }
.assigned { height: 27px; background: #b1b1b1; color: #fff; font-size: 17px; font-weight: 600; line-height: 26px; text-align: center; }

/* inspector */
.inspector { display: flex; flex-direction: column; flex: 1; border-top: 5px solid #1b2030; background: #eaeaea; }
.insp-tabs { height: 40px; padding-right: 7px; justify-content: flex-end; border-bottom: 4px solid #f2f2f2; background: #b1b1b1; box-shadow: none; }
.insp-tabs .tab { border-bottom: 0; margin-left: 1px; padding-bottom: 2px; }
.insp-tabs .active { border-top-color: #f2f2f2; }
.t-props { width: 210px; padding-left: 2px; }
.t-info { width: 115px; padding-left: 2px; }
.t-info .yellow { margin-left: 4px; }
.t-diag { width: 160px; padding-left: 3px; }
.insp-tabs .winbtns { margin: 4px 0 0 29px; align-items: flex-start; padding-top: 1px; }
.sub-tabs { padding: 5px 0 0 9px; }
.sub-tabs .tab { width: 150px; padding: 0 0 4px 16px; border-right-width: 1px; border-top-width: 1px; }
.message { padding: 58px 24px 24px 95px; }
.message h4 { margin-bottom: 15px; font-size: 20px; font-weight: 600; }
.message p { max-width: 612px; }
```
